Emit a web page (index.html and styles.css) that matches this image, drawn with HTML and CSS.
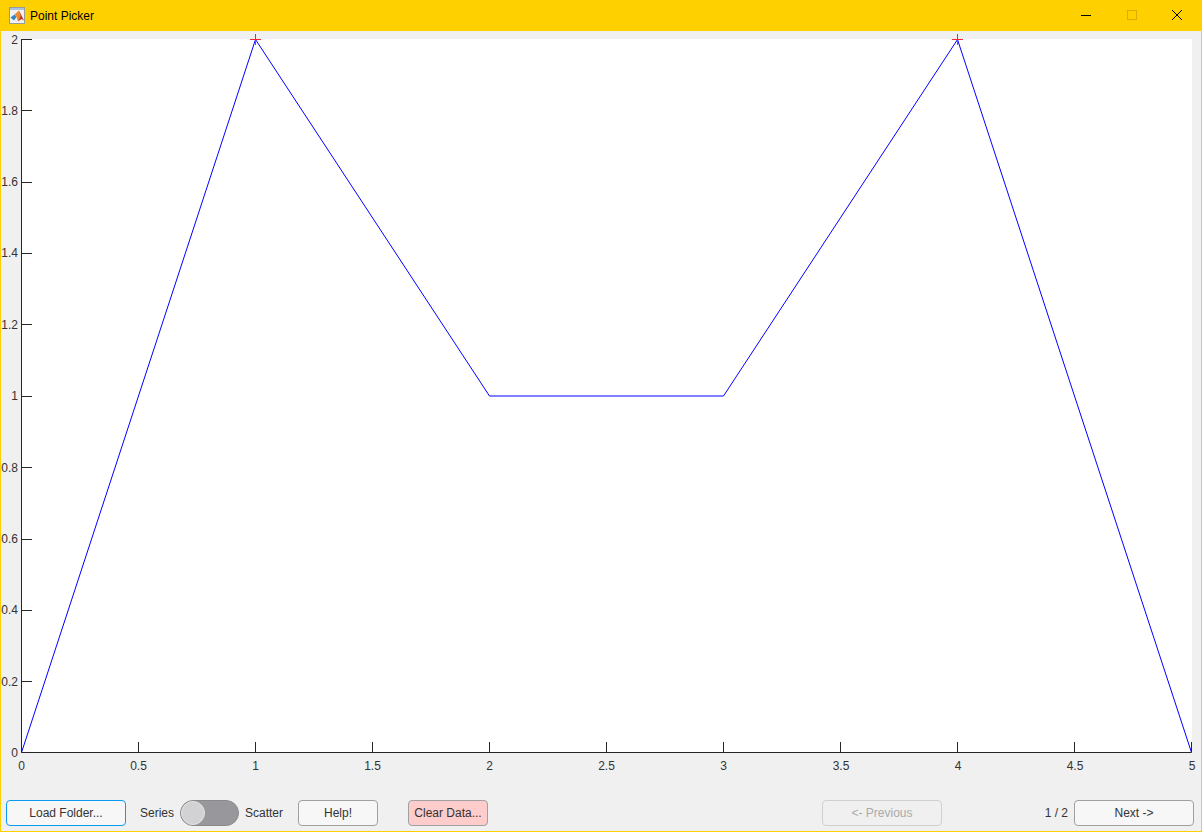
FILE: index.html
```html
<!DOCTYPE html>
<html lang="en">
<head>
    <meta charset="UTF-8">
    <title>Point Picker</title>
    <link rel="stylesheet" href="styles.css">
</head>
<body>
    <div class="window">
        <div class="titlebar">
            <svg class="app-icon" width="16" height="17" viewBox="0 0 16 17">
                <rect x="0.5" y="0.5" width="15" height="16" fill="#f2f2f2" stroke="#9a9a9a"/>
                <rect x="1" y="1" width="14" height="2" fill="#a9c4dc"/>
                <path d="M1.5 10.5 L5.5 7.5 L7.5 10 L5 13.5 Z" fill="#2f86c8"/>
                <path d="M5.5 7.5 L10 3.5 L11.5 9 L9 14.5 L7.5 10 Z" fill="#ee8a2c"/>
                <path d="M10 3.5 L12 7.5 L15 13.5 L12.5 12 L9 14.5 L11.5 9 Z" fill="#b8381c"/>
            </svg>
            <span class="title">Point Picker</span>
            <div class="win-buttons">
                <div class="win-btn"><svg width="12" height="12" viewBox="0 0 12 12"><path d="M1 5.5H11" stroke="#000"/></svg></div>
                <div class="win-btn"><svg width="12" height="12" viewBox="0 0 12 12"><rect x="1.5" y="0.5" width="9" height="9" fill="none" stroke="#d9ac00"/></svg></div>
                <div class="win-btn"><svg width="12" height="12" viewBox="0 0 12 12"><path d="M1 0L11 10M11 0L1 10" stroke="#000"/></svg></div>
            </div>
        </div>
        <div class="content">
            <svg class="plot" width="1200" height="769" viewBox="0 0 1200 769">
                <rect x="21" y="8" width="1170" height="714" fill="#fff"/>
                <g class="axis">
                    <path d="M20.5 8V721.5H1190.5"/>
                    <path d="M20.5 8.5H31M20.5 79.5H31M20.5 151.5H31M20.5 222.5H31M20.5 293.5H31M20.5 365.5H31M20.5 436.5H31M20.5 508.5H31M20.5 579.5H31M20.5 650.5H31"/>
                    <path d="M137.5 721V711M254.5 721V711M371.5 721V711M488.5 721V711M605.5 721V711M722.5 721V711M839.5 721V711M956.5 721V711M1073.5 721V711M1190.5 721V711"/>
                </g>
                <g class="ticks-y">
                    <text x="17" y="13">2</text>
                    <text x="17" y="84">1.8</text>
                    <text x="17" y="155">1.6</text>
                    <text x="17" y="226">1.4</text>
                    <text x="17" y="298">1.2</text>
                    <text x="17" y="369">1</text>
                    <text x="17" y="441">0.8</text>
                    <text x="17" y="512">0.6</text>
                    <text x="17" y="583">0.4</text>
                    <text x="17" y="655">0.2</text>
                    <text x="17" y="726">0</text>
                </g>
                <g class="ticks-x">
                    <text x="20.5" y="739">0</text>
                    <text x="137.5" y="739">0.5</text>
                    <text x="254.5" y="739">1</text>
                    <text x="371.5" y="739">1.5</text>
                    <text x="488.5" y="739">2</text>
                    <text x="605.5" y="739">2.5</text>
                    <text x="722.5" y="739">3</text>
                    <text x="840" y="739">3.5</text>
                    <text x="957" y="739">4</text>
                    <text x="1074" y="739">4.5</text>
                    <text x="1191" y="739">5</text>
                </g>
                <polyline class="line" points="20.5,721.5 254.5,8.5 488.5,365 722.5,365 956.5,8.5 1190.5,721.5"/>
                <path class="marker" d="M249 8.5H260M254.5 3V14M951 8.5H962M956.5 3V14"/>
            </svg>
            <div class="controls">
                <button class="btn focused">Load Folder...</button>
                <span class="label series">Series</span>
                <div class="toggle"><div class="knob"></div></div>
                <span class="label scatter">Scatter</span>
                <button class="btn help">Help!</button>
                <button class="btn clear">Clear Data...</button>
                <button class="btn prev" disabled>&lt;- Previous</button>
                <span class="label page">1 / 2</span>
                <button class="btn next">Next -&gt;</button>
            </div>
        </div>
    </div>
</body>
</html>
```

FILE: styles.css
```css
* { box-sizing: border-box; }
html, body {
    margin: 0;
    padding: 0;
    overflow: hidden;
}
body {
    font-family: "Liberation Sans", Arial, sans-serif;
    font-size: 12px;
    color: #333;
}
.window {
    width: 1202px;
    height: 832px;
    display: flex;
    flex-direction: column;
    background: #f0f0f0;
    border: 1px solid #ffd000;
    border-top: none;
}
.titlebar {
    height: 31px;
    margin: 0 -1px;
    background: #ffd000;
    display: flex;
    align-items: center;
    padding-left: 9px;
    padding-right: 2px;
    flex: none;
}
.app-icon { margin-right: 5px; }
.title { color: #000; font-size: 12px; }
.win-buttons {
    margin-left: auto;
    display: flex;
}
.win-btn {
    width: 45.5px;
    height: 31px;
    display: flex;
    align-items: center;
    justify-content: center;
}
.content {
    flex: 1;
    display: flex;
    flex-direction: column;
}
.plot { display: block; flex: none; }
.axis path { fill: none; stroke: #262626; stroke-width: 1; }
.line { fill: none; stroke: #0000ff; stroke-width: 1; }
.marker { fill: none; stroke: #ff2030; stroke-width: 1; }
.plot text { font-size: 12px; fill: #333; font-family: "Liberation Sans", Arial, sans-serif; }
.ticks-y text { text-anchor: end; }
.ticks-x text { text-anchor: middle; }
.controls {
    display: flex;
    align-items: center;
    height: 26px;
    padding-left: 5px;
    padding-right: 7px;
}
.btn {
    width: 120px;
    height: 26px;
    padding: 0;
    background: #f7f7f7;
    border: 1px solid #a0a0a0;
    border-radius: 4px;
    font-family: inherit;
    font-size: 12px;
    color: #333;
}
.btn.focused { border-color: #0a9bf0; }
.btn.help { width: 80px; margin-left: 15px; }
.btn.clear { width: 80px; margin-left: 30px; background: #ffcccc; }
.btn.prev {
    margin-left: 334px;
    border-color: #d0d0d0;
    background: #f0f0f0;
    color: #aaaaaa;
}
.btn.next { margin-left: 6px; }
.label { white-space: nowrap; }
.series { margin-left: 14px; margin-right: 6px; }
.scatter { margin-left: 6px; }
.page { margin-left: auto; }
.toggle {
    width: 59px;
    height: 26px;
    background: #98989c;
    border: 1px solid #8a8a8a;
    border-radius: 13px;
}
.knob {
    width: 24px;
    height: 24px;
    background: #d2d2d4;
    border: 1px solid #e4e4e6;
    border-radius: 50%;
}
```
